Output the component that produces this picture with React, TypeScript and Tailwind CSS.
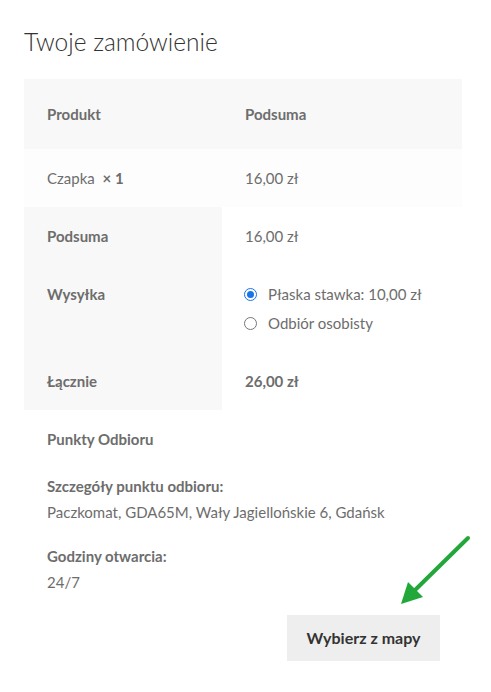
import React from 'react';

const font = { fontFamily: 'Lato, "Noto Sans", sans-serif' };

const Radio = ({ checked }: { checked?: boolean }) => (
  <span
    className={`inline-flex h-[13px] w-[13px] shrink-0 items-center justify-center rounded-full border ${
      checked ? 'border-[#1a73e8] bg-white' : 'border-[#767676] bg-white'
    }`}
  >
    {checked && <span className="h-[7px] w-[7px] rounded-full bg-[#1a73e8]" />}
  </span>
);

const App = () => {
  return (
    <div className="relative min-h-[692px] w-[491px] bg-white text-[15px] text-[#6d6d6d]" style={font}>
      {/* --- TITLE --- */}
      <h3 className="px-[24px] pt-[25px] text-[24.5px] font-light leading-[34px] text-[#333]">Twoje zamówienie</h3>

      {/* --- ORDER TABLE --- */}
      <div className="mx-[24px] mt-[20px] w-[438px]">
        <div className="grid grid-cols-[198px_240px] bg-[#f8f8f8] font-bold leading-[26px]">
          <div className="px-[23px] py-[22px]">Produkt</div>
          <div className="px-[23px] py-[22px]">Podsuma</div>
        </div>
        <div className="grid grid-cols-[198px_240px] bg-[#fdfdfd] leading-[26px]">
          <div className="px-[23px] py-[16px]">
            Czapka <strong className="ml-1 font-bold">× 1</strong>
          </div>
          <div className="px-[23px] py-[16px]">16,00 zł</div>
        </div>
        <div className="grid grid-cols-[198px_240px] leading-[26px]">
          <div className="bg-[#f8f8f8] px-[23px] py-[16px] font-bold">Podsuma</div>
          <div className="px-[23px] py-[16px]">16,00 zł</div>
          <div className="bg-[#f8f8f8] px-[23px] py-[16px] font-bold">Wysyłka</div>
          <div className="px-[22px] py-[16px]">
            <ul className="flex flex-col gap-[3px]">
              <li className="flex items-center gap-[11px]">
                <Radio checked />
                <span>Płaska stawka: 10,00 zł</span>
              </li>
              <li className="flex items-center gap-[11px]">
                <Radio />
                <span>Odbiór osobisty</span>
              </li>
            </ul>
          </div>
          <div className="bg-[#f8f8f8] px-[23px] py-[16px] font-bold">Łącznie</div>
          <div className="px-[23px] py-[16px] font-bold">26,00 zł</div>
        </div>

        {/* --- PICKUP POINTS --- */}
        <div className="px-[23px] pt-[16px] leading-[26px]">
          <div className="font-bold">Punkty Odbioru</div>
          <div className="mt-[21px] font-bold">Szczegóły punktu odbioru:</div>
          <div>Paczkomat, GDA65M, Wały Jagiellońskie 6, Gdańsk</div>
          <div className="mt-[18px] font-bold">Godziny otwarcia:</div>
          <div>24/7</div>
          <div className="mt-[20px] flex justify-end">
            <button className="mr-[-1px] h-[46px] w-[153px] bg-[#eeeeee] text-[16px] font-bold text-[#333]">Wybierz z mapy</button>
          </div>
        </div>
      </div>

      {/* --- ANNOTATION ARROW --- */}
      <svg className="absolute left-[395px] top-[532px]" width="80" height="80" viewBox="0 0 80 80">
        <line x1="73" y1="6" x2="16" y2="62" stroke="#22a83a" strokeWidth="4" strokeLinecap="round" />
        <polygon points="6,72 13,50 28,65" fill="#22a83a" />
      </svg>
    </div>
  );
};

export default App;
